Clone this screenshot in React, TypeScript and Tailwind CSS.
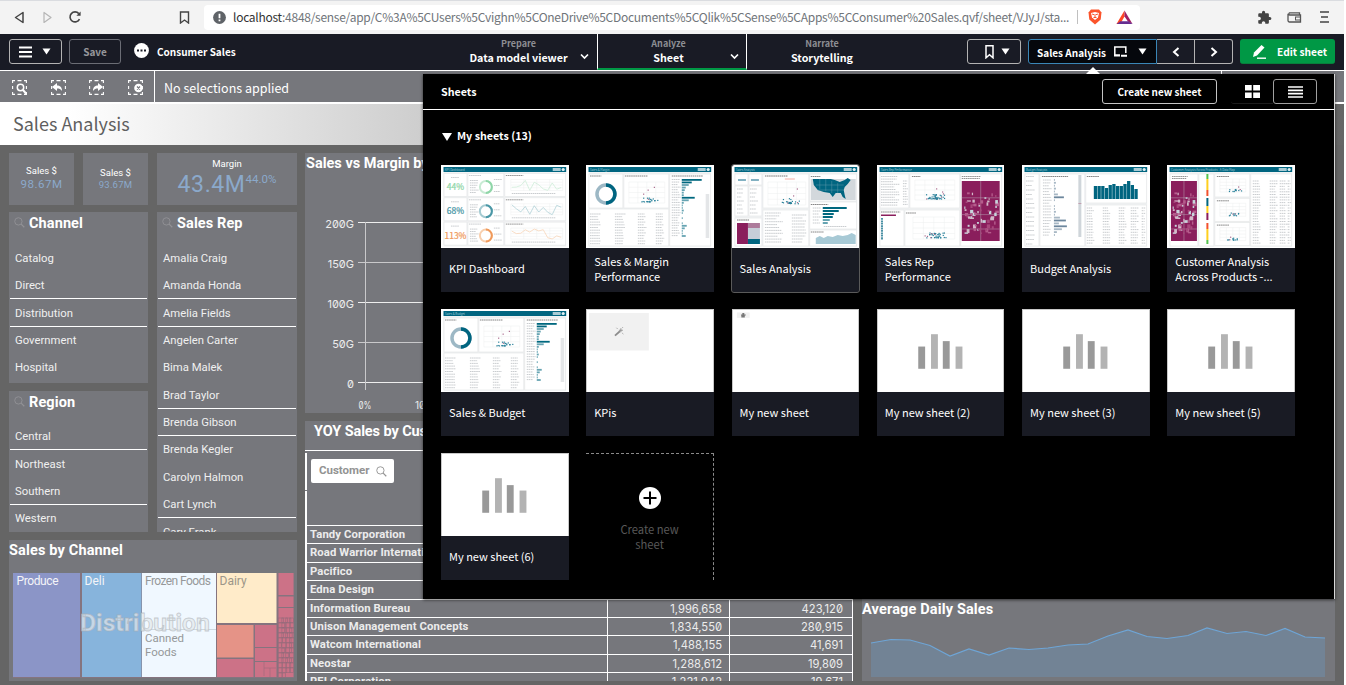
import React, { type ReactNode } from 'react';
import { MdExtension } from 'react-icons/md';

const rnd = (seed: number) => {
  const v = Math.sin(seed * 127.1 + 11.7) * 43758.5453;
  return v - Math.floor(v);
};
const range = (n: number) => Array.from({ length: n }, (_, i) => i);

const TEAL = '#006580';
const PLUM = '#8a1e5c';

function Caret({ className = '' }: { className?: string }) {
  return (
    <svg className={`shrink-0 ${className}`} width="9" height="7" viewBox="0 0 9 7">
      <path d="M0.5 0.5h8L4.5 6.5z" fill="#fff" />
    </svg>
  );
}

function Chevron({ d = 'M1 1.5l3.5 3.5L8 1.5', className = '' }: { d?: string; className?: string }) {
  return (
    <svg className={className} width="9" height="7" viewBox="0 0 9 7">
      <path d={d} fill="none" stroke="#fff" strokeWidth="1.7" />
    </svg>
  );
}

function BrowserBar() {
  return (
    <div className="flex h-[34px] items-center border-t border-[#dadce0] bg-[#f3f3f3] pb-px">
      <svg className="ml-[14px]" width="11" height="13" viewBox="0 0 11 13">
        <path d="M9 1.5v10L1.5 6.5z" fill="none" stroke="#444" strokeWidth="1.5" strokeLinejoin="round" />
      </svg>
      <svg className="ml-[17px]" width="11" height="13" viewBox="0 0 11 13">
        <path d="M2 1.5v10L9 6.5z" fill="none" stroke="#b5b5b5" strokeWidth="1.2" strokeLinejoin="round" />
      </svg>
      <svg className="ml-[15px]" width="14" height="14" viewBox="0 0 14 14">
        <path d="M11.5 9.2A5 5 0 1 1 10.8 3.6" fill="none" stroke="#444" strokeWidth="1.6" />
        <path d="M12.6 1.5v4.2H8.4z" fill="#444" />
      </svg>
      <svg className="ml-[97px]" width="11" height="13" viewBox="0 0 11 13">
        <path d="M1.5 1h8v11l-4-3-4 3z" fill="none" stroke="#444" strokeWidth="1.4" />
      </svg>
      <div className="ml-[14px] flex h-[25px] w-[936px] items-center rounded bg-white">
        <svg className="ml-[9px] shrink-0" width="13" height="13" viewBox="0 0 13 13">
          <circle cx="6.5" cy="6.5" r="6.4" fill="#5f6368" />
          <path d="M6.5 2.7v4.6M6.5 8.6v1.7" stroke="#fff" strokeWidth="1.8" />
        </svg>
        <div className="ml-[7px] w-[840px] font-['Noto_Sans_CJK_SC',sans-serif] text-[12px] leading-[22px] tracking-[-0.27px] whitespace-nowrap text-[#70757a]">
          <span className="text-[#333]">localhost</span>:4848/sense/app/C%3A%5CUsers%5Cvighn%5COneDrive%5CDocuments%5CQlik%5CSense%5CApps%5CConsumer%20Sales.qvf/sheet/VJyJ/sta...
        </div>
        <div className="ml-[4px] h-[14px] w-px bg-[#c0c0c0]" />
        <svg className="ml-[10px]" width="14" height="16" viewBox="0 0 14 16">
          <path d="M3 .5h8l2.5 3-.8 7L7 15.5 1.300 10.500.5 3.500z" fill="#fb542b" />
          <path d="M3 4l4-1 4 1-1 4.500L7 11 4 8.500z" fill="#fff" />
          <path d="M4 5l2 .7M10 5l-2 .7M7 5v3.200M5.500 8.500h3" stroke="#fb542b" strokeWidth="1" />
        </svg>
        <svg className="ml-[14px]" width="17" height="15" viewBox="0 0 17 15">
          <path d="M8.500.5L.5 14h3.700L8.500 6.600z" fill="#ff4724" />
          <path d="M8.500.5L16.500 14 12 11.500 8.500 6.600z" fill="#9e1f63" />
          <path d="M.5 14h16l-4-2.700H4.500z" fill="#662d91" />
        </svg>
      </div>
      <MdExtension className="ml-[117px]" size={15} color="#444" />
      <svg className="ml-[15px]" width="15" height="13" viewBox="0 0 15 13">
        <path d="M12.500 3.500V1.800H2.500a1.300 1.300 0 0 0 0 2.200h11v7H2.500a1.500 1.500 0 0 1-1.500-1.500V2.700" fill="none" stroke="#555" strokeWidth="1.300" />
        <rect x="8.500" y="6" width="5" height="3" fill="none" stroke="#555" />
      </svg>
      <svg className="ml-[18px]" width="9" height="12" viewBox="0 0 9 12">
        <path d="M0 1h9M1 6h7M0 11h9" stroke="#444" strokeWidth="1.500" />
      </svg>
    </div>
  );
}

function NavTab({ label, title, active, chevron, width }: { label: string; title: string; active?: boolean; chevron?: string; width: string }) {
  return (
    <div className={`relative flex h-[36px] flex-col items-center pt-[3px] ${width} ${active ? 'border-x border-b-2 border-white border-b-[#009845]' : ''}`}>
      <span className="text-[9px] leading-[13px] text-[#8d8e93]">{label}</span>
      <span className="text-[10.700px] leading-[15px] font-bold text-white">{title}</span>
      {chevron && <Chevron className={`absolute top-[19px] ${chevron}`} />}
    </div>
  );
}

function TopBar() {
  return (
    <div className="flex h-[37px] border-b border-white bg-[#191b25] text-[10px] font-bold text-white">
      <div className="mt-[5px] ml-[9px] flex h-[25px] w-[53px] items-center rounded-[3px] border border-[#b3b3b3]">
        <svg className="ml-[9px]" width="13" height="12" viewBox="0 0 13 12">
          <path d="M0 1.500h13M0 6h13M0 10.500h13" stroke="#fff" strokeWidth="2.200" />
        </svg>
        <Caret className="ml-[10px]" />
      </div>
      <div className="mt-[5px] ml-[7px] flex h-[25px] w-[52px] items-center justify-center rounded-[3px] border border-[#6b6d75] text-[#96979b]">Save</div>
      <svg className="mt-[9px] ml-[13px]" width="15" height="15" viewBox="0 0 15 15">
        <circle cx="7.500" cy="7.500" r="7.400" fill="#fff" />
        <path d="M3 6.500h2v2h-2zM6.500 6.500h2v2h-2zM10 6.500h2v2h-2z" fill="#191b25" />
      </svg>
      <div className="mt-[9px] ml-[8px] w-[284px] pt-px leading-[16px]">Consumer Sales</div>
      <NavTab width="w-[156px] pr-[1px]" label="Prepare" title="Data model viewer" chevron="left-[139px]" />
      <NavTab width="w-[150px] pr-[7px]" label="Analyze" title="Sheet" active chevron="left-[132px]" />
      <NavTab width="w-[150px]" label="Narrate" title="Storytelling" />
      <div className="mt-[5px] ml-[70px] flex h-[25px] w-[54px] items-center rounded-[3px] border border-[#b3b3b3]">
        <svg className="ml-[17px]" width="9" height="14" viewBox="0 0 9 14">
          <path d="M1 .8h7v12l-3.500-3-3.500 3z" fill="none" stroke="#fff" strokeWidth="1.500" />
        </svg>
        <Caret className="ml-[7px]" />
      </div>
      <div className="mt-[5px] ml-[7px] flex h-[25px] w-[129px] items-center rounded-l-[3px] border border-[#3a86b7] bg-[#05070c] pl-[8px]">
        <span className="w-[68px] pt-px whitespace-nowrap">Sales Analysis</span>
        <svg className="ml-[8px] shrink-0" width="15" height="12" viewBox="0 0 15 12">
          <path d="M7 9.200H1.800V1h11v6" fill="none" stroke="#fff" strokeWidth="1.500" />
          <path d="M1 9.500h6M8 9.800h6" stroke="#fff" strokeWidth="2" />
        </svg>
        <Caret className="ml-[10px]" />
      </div>
      <div className="mt-[5px] flex h-[25px] w-[38px] items-center justify-center border-y border-r border-[#b3b3b3]">
        <svg width="8" height="10" viewBox="0 0 8 10"><path d="M6.500 1L2 5l4.500 4" fill="none" stroke="#fff" strokeWidth="2" /></svg>
      </div>
      <div className="mt-[5px] flex h-[25px] w-[38px] items-center justify-center rounded-r-[3px] border-y border-r border-[#b3b3b3]">
        <svg width="8" height="10" viewBox="0 0 8 10"><path d="M1.500 1L6 5l-4.500 4" fill="none" stroke="#fff" strokeWidth="2" /></svg>
      </div>
      <div className="mt-[5px] ml-[7px] flex h-[25px] w-[95px] items-center rounded-[3px] border-b border-[#087f3c] bg-[#009845] text-[10.200px]">
        <svg className="ml-[12px]" width="15" height="15" viewBox="0 0 15 15">
          <path d="M1 13l1-4.500L9.500 1l3 2.500L5 11.500z" fill="#fff" />
          <path d="M5 14.200h9" stroke="#fff" strokeWidth="1.400" />
        </svg>
        <span className="ml-[10px] pt-px whitespace-nowrap">Edit sheet</span>
      </div>
    </div>
  );
}

function SelIcon({ children }: { children: ReactNode }) {
  return (
    <svg className="shrink-0" width="15" height="15" viewBox="0 0 15 15">
      <path d="M.6 3V.6H3M5.500.6h4M12 .6h2.400V3M14.400 6v3M14.400 12v2.400H12M9.500 14.400h-4M3 14.400H.6V12M.6 9V6" fill="none" stroke="#fff" strokeWidth="1.100" />
      {children}
    </svg>
  );
}

function SelectionBar() {
  return (
    <div className="flex h-[32px] items-center border-b border-white bg-[#76777c]">
      <div className="flex h-full w-[155px] items-center gap-[23.500px] border-r border-white pt-[2px] pl-[12px]">
        <SelIcon><circle cx="8.500" cy="7.500" r="3.200" fill="#76777c" stroke="#fff" strokeWidth="1.500" /><path d="M11 10l3.500 4" stroke="#fff" strokeWidth="2" /></SelIcon>
        <SelIcon><path d="M1 7l5-4v2.500c3 0 5 1.500 5 5.500-1.500-2-2.500-2.500-5-2.500V11z" fill="#fff" /></SelIcon>
        <SelIcon><path d="M14 7L9 3v2.500c-3 0-5 1.500-5 5.500 1.500-2 2.500-2.500 5-2.500V11z" fill="#fff" /></SelIcon>
        <SelIcon><circle cx="10.500" cy="8" r="4.300" fill="#fff" /><path d="M9 6.500l3 3M12 6.500l-3 3" stroke="#76777c" strokeWidth="1.200" /></SelIcon>
      </div>
      <span className="ml-[9px] pt-[2px] text-[12.500px] leading-[20px] text-white">No selections applied</span>
      <div className="ml-auto h-full w-[123px] border-l border-white" />
    </div>
  );
}

function Magnifier({ className, size }: { className: string; size: number }) {
  return (
    <svg className={`shrink-0 ${className}`} width={size} height={size} viewBox="0 0 12 12" fill="none" stroke="currentColor">
      <circle cx="4.800" cy="4.800" r="4" strokeWidth="1" />
      <path d="M7.800 7.800l3.400 3.400" strokeWidth="1.300" />
    </svg>
  );
}

function ListBox({ title, items, lines, className, gap }: { title: string; items: string[]; lines: number[]; className: string; gap: string }) {
  return (
    <div className={`overflow-hidden bg-[#76777c] ${className}`}>
      <div className={`flex items-start pt-[3px] ${gap}`}>
        <Magnifier className="mt-[2px] ml-[5px] text-[#929296]" size={11} />
        <span className="ml-[4px] text-[14.500px] leading-[17px] font-bold tracking-[.1px] text-white">{title}</span>
      </div>
      {items.map((t, i) => (
        <div key={t} className={`mx-px flex h-[27.400px] items-center border-b pt-[3px] pl-[5px] text-[11.300px] text-[#f0f0f0] ${lines.includes(i) ? 'border-white' : 'border-transparent'}`}>
          {t}
        </div>
      ))}
    </div>
  );
}

function Treemap() {
  const cells: [number, number, number, number][] = range(46).map((i) => {
    const row = Math.floor(i / 4);
    return [265 + (i % 4) * 3.900, 45 + row * 5, 3.400, 4.400];
  });
  return (
    <svg className="ml-[4px] block font-['Roboto',sans-serif]" width="281" height="105" viewBox="0 0 281 105">
      <rect width="281" height="105" fill="#85747f" />
      <rect width="67" height="104" fill="#8b95c7" />
      <rect x="69" width="59.500" height="104" fill="#87b4dc" />
      <rect x="129" width="74" height="104" fill="#f0f8ff" />
      <path d="M129 56.500h74" stroke="#cfd8de" />
      <rect x="204" width="59.500" height="50" fill="#ffebc9" />
      <rect x="204" y="52" width="36.500" height="32.500" fill="#e59387" />
      <rect x="204" y="86" width="36.500" height="18" fill="#cc7287" />
      <rect x="242" y="52" width="21.500" height="22" fill="#cc7287" />
      <rect x="242" y="75" width="21.500" height="13" fill="#cc7287" />
      <rect x="242" y="89" width="21.500" height="15" fill="#cc7287" />
      <path d="M251 89v6h12M257 95v9M251 95v8" stroke="#a06a7c" fill="none" strokeWidth=".7" />
      <rect x="265.500" width="15" height="22" fill="#cc7287" />
      <rect x="265.500" y="23.500" width="15" height="10.500" fill="#cc7287" />
      <rect x="265.500" y="35" width="15" height="69" fill="#cc7287" />
      {cells.map((c, i) => (
        <rect key={i} x={c[0]} y={c[1]} width={c[2] + rnd(i) * 3} height={c[3]} fill="none" stroke="#936b7b" strokeWidth=".6" />
      ))}
      <g fontSize="12">
        <text x="3.500" y="12" fill="#f4f4f8" textLength="42">Produce</text>
        <text x="71.500" y="12" fill="#f4f4f8">Deli</text>
        <text x="132" y="12" fill="#96989a" textLength="66">Frozen Foods</text>
        <text x="206.500" y="12" fill="#9c9688">Dairy</text>
        <text x="132" y="68.500" fill="#96989a" fontSize="11.500">Canned</text>
        <text x="132" y="83" fill="#96989a" fontSize="11.500">Foods</text>
      </g>
      <text x="67" y="58" fontSize="23" fontWeight="700" textLength="130" lengthAdjust="spacingAndGlyphs" fill="#e4e8ec" fillOpacity=".7" stroke="#a8adb2" strokeOpacity=".6" strokeWidth=".8">Distribution</text>
    </svg>
  );
}

const rows: [string, string, string][] = [
  ['Tandy Corporation', '', ''],
  ['Road Warrior International', '', ''],
  ['Pacifico', '', ''],
  ['Edna Design', '', ''],
  ['Information Bureau', '1,996,658', '423,120'],
  ['Unison Management Concepts', '1,834,550', '280,915'],
  ['Watcom International', '1,488,155', '41,691'],
  ['Neostar', '1,288,612', '19,809'],
  ['RFI Corporation', '1,231,942', '19,671'],
];

function MiddleColumn() {
  return (
    <div className="ml-[8px] flex w-[548px] flex-col gap-[8px]">
      <div className="h-[260px] overflow-hidden bg-[#76777c]">
        <div className="pt-[2px] pl-[1px] text-[14.500px] leading-[17px] font-bold whitespace-nowrap text-white">Sales vs Margin by Product</div>
        <svg className="block font-['Inter',sans-serif]" width="540" height="241" viewBox="0 0 540 241">
          {['200G', '150G', '100G', '50G', '0'].map((t, i) => (
            <g key={t}>
              <path d={`M53 ${50.500 + i * 40}H540`} stroke={i % 2 ? '#c9c9cb' : '#eeeeee'} />
              <text x="49" y={55.500 + i * 40} fontSize="11" textAnchor="end" fill="#ececec" style={{ fontFeatureSettings: '"zero"' }}>{t}</text>
            </g>
          ))}
          <path d="M60.500 50v168" stroke="#c9c9cb" />
          <text x="53.500" y="237" fontSize="10" textLength="13" lengthAdjust="spacingAndGlyphs" fill="#ececec" style={{ fontFeatureSettings: '"zero"' }}>0%</text>
          <text x="110" y="237" fontSize="10" fill="#ececec" style={{ fontFeatureSettings: '"zero"' }}>10%</text>
        </svg>
      </div>
      <div className="flex h-[260px] flex-col overflow-hidden bg-[#76777c]">
        <div className="h-[30px] shrink-0 border-b border-white pt-[2px] pl-[9px] text-[14.500px] leading-[18px] font-bold tracking-[-.1px] text-white">YOY Sales by Customer</div>
        <div className="mt-[2px] h-[37px] shrink-0 border-l-2 border-white pt-[6px] pl-[4px]">
          <div className="flex h-[24px] w-[83px] items-center rounded-[2px] bg-white pl-[8px] text-[11.500px] font-bold text-[#939393]">
            Customer<Magnifier className="ml-[6px]" size={11} />
          </div>
        </div>
        <div className="mt-px h-[35px] shrink-0 border-b border-l-2 border-white" />
        {rows.map(([n, a, b]) => (
          <div key={n} className="flex h-[18.400px] shrink-0 border-b border-l-2 border-white text-[11.300px] leading-[18px] text-[#ececec]">
            <div className="w-[301px] border-r border-white pl-[3px] font-bold tracking-[.1px] whitespace-nowrap">{n}</div>
            <div className="w-[122px] border-r border-white pr-[7px] text-right font-['Inter',sans-serif] text-[11.200px] slashed-zero">{a}</div>
            <div className="w-[123px] border-r border-white pr-[9px] text-right font-['Inter',sans-serif] text-[11.200px] slashed-zero">{b}</div>
          </div>
        ))}
      </div>
    </div>
  );
}

function Dashboard() {
  const pts = '9,61 29,57.500 48,58 68,63.500 88,74 107,67 127,73 147,66 167,67.500 186,66 206,63 226,62 246,54 266,48 285,54.500 305,56.500 326,53.500 345,46 365,51.500 384,49.500 404,53.500 423,46.500 443,55 463,56';
  return (
    <div className="flex h-[540px] bg-[#656565] pt-[8px] pl-[9px] font-['Roboto',sans-serif]">
      <div className="flex w-[288px] flex-col">
        <div className="flex h-[52px] gap-[9px] text-[9.500px] text-white">
          <div className="flex w-[65px] flex-col items-center bg-[#76777c] pt-[12px] leading-[12px]">
            Sales $<span className="text-[11.500px] leading-[15px] tracking-[.5px] text-[#8ba9cb]">98.67M</span>
          </div>
          <div className="flex w-[65px] flex-col items-center bg-[#76777c] pt-[14px] leading-[12px]">
            Sales $<span className="text-[9.500px] leading-[12px] tracking-[.2px] text-[#8ba9cb]">93.67M</span>
          </div>
          <div className="flex w-[140px] flex-col items-center bg-[#76777c] pt-[4px] leading-[13px]">
            Margin
            <div className="flex items-start text-[#8ba9cb] slashed-zero">
              <span className="text-[23px] leading-[30px] font-normal tracking-[.6px]">43.4M</span>
              <span className="pt-[2px] text-[11.500px] leading-[14px]">44.0%</span>
            </div>
          </div>
        </div>
        <div className="mt-[7px] flex gap-[9px]">
          <div className="flex w-[139px] flex-col gap-[8px]">
            <ListBox title="Channel" gap="h-[32.500px]" className="h-[171px]" lines={[1, 2]} items={['Catalog', 'Direct', 'Distribution', 'Government', 'Hospital']} />
            <ListBox title="Region" gap="h-[32px]" className="h-[141px]" lines={[0, 2]} items={['Central', 'Northeast', 'Southern', 'Western']} />
          </div>
          <ListBox title="Sales Rep" gap="h-[32.500px]" className="h-[320px] w-[140px]" lines={[1, 2, 5, 6, 9]} items={['Amalia Craig', 'Amanda Honda', 'Amelia Fields', 'Angelen Carter', 'Bima Malek', 'Brad Taylor', 'Brenda Gibson', 'Brenda Kegler', 'Carolyn Halmon', 'Cart Lynch', 'Cary Frank']} />
        </div>
        <div className="mt-[8px] h-[141px] bg-[#76777c]">
          <div className="h-[33px] pt-[2px] text-[14.500px] leading-[18px] font-bold tracking-[.15px] text-white">Sales by Channel</div>
          <Treemap />
        </div>
      </div>
      <MiddleColumn />
      <div className="ml-[9px] h-[528px] w-[473px] bg-[#76777c] pt-[447px]">
        <div className="h-[19px] pt-px text-[14.500px] leading-[18px] font-bold tracking-[.15px] text-white">Average Daily Sales</div>
        <svg className="-mt-[15px] block" width="473" height="76" viewBox="0 22 473 76">
          <polygon points={`9,95 ${pts} 463,95`} fill="#728395" />
          <polyline points={pts} fill="none" stroke="#6ea5d6" strokeWidth="1.200" />
        </svg>
      </div>
    </div>
  );
}

/* ---------- sheet thumbnails ---------- */

function Box({ x, y, w, h }: { x: number; y: number; w: number; h: number }) {
  return <rect x={x} y={y} width={w} height={h} fill="#fff" stroke="#e6e8e9" strokeWidth=".7" />;
}
function Lines({ x, y, w, n, gap, seed = 1, color = '#c3c6c9' }: { x: number; y: number; w: number; n: number; gap: number; seed?: number; color?: string }) {
  return (
    <g stroke={color} strokeWidth=".9" strokeDasharray="1.600 .5">
      {range(n).map((i) => (
        <path key={i} d={`M${x} ${y + i * gap}h${w * (0.600 + 0.400 * rnd(seed + i))}`} />
      ))}
    </g>
  );
}
function Grid({ x, y, w, h }: { x: number; y: number; w: number; h: number }) {
  return (
    <path stroke="#eceeef" strokeWidth=".5" fill="none" d={range(5).map((i) => `M${x} ${y + (i * h) / 4}h${w}M${x + (i * w) / 4} ${y}v${h}`).join('')} />
  );
}
function Scatter({ x, y, w, h, n, seed }: { x: number; y: number; w: number; h: number; n: number; seed: number }) {
  return (
    <g>
      <Grid x={x} y={y} w={w} h={h} />
      {range(n).map((i) => {
        const a = (rnd(seed + i) + rnd(seed + i + 200)) / 2;
        const b = rnd(seed + i * 3 + 50);
        return <rect key={i} x={x + w * (0.25 + 0.600 * a)} y={y + h * (0.92 - (i % 7 === 0 ? 0.700 : 0.220) * b * b)} width="1.200" height="1.200" fill={i % 7 === 0 ? '#a9688c' : '#28809a'} />;
      })}
    </g>
  );
}
function Donut({ cx, cy, r, c, w, light }: { cx: number; cy: number; r: number; c: string; w: number; light: string }) {
  return (
    <g fill="none" strokeWidth={w}>
      <circle cx={cx} cy={cy} r={r} stroke={light} />
      <path d={`M${cx} ${cy - r}A${r} ${r} 0 0 1 ${cx} ${cy + r}`} stroke={c} />
    </g>
  );
}
function Heat({ x, y, w, h }: { x: number; y: number; w: number; h: number }) {
  return (
    <g>
      <rect x={x} y={y} width={w} height={h} fill={PLUM} />
      <path d={`M${x + w / 2} ${y}v${h}M${x} ${y + h * 0.280}h${w}M${x} ${y + h * 0.560}h${w}M${x} ${y + h * 0.800}h${w}`} stroke="#b7a3b4" strokeWidth=".5" />
      {range(60).map((i) => (
        <rect key={i} x={x + rnd(i + 3) * (w - 4)} y={y + h * 0.180 + rnd(i + 70) * h * 0.680} width={1 + rnd(i + 9) * 3} height={1 + rnd(i + 5) * 3} fill={['#d3b9c9', '#b55c8c', '#c7d5dc', '#a8487c'][i % 4]} />
      ))}
    </g>
  );
}
function HBars({ x, y, sizes, gap, color = '#00687f', h = 1.800 }: { x: number; y: number; sizes: number[]; gap: number; color?: string; h?: number }) {
  return (
    <g fill={color}>
      {sizes.map((s, i) => <rect key={i} x={x} y={y + i * gap} width={s} height={h} opacity={s < 10 ? 0.600 : 1} />)}
    </g>
  );
}
function Frame({ title, children }: { title: string; children: ReactNode }) {
  return (
    <svg className="block h-[83px] w-full bg-white font-['Noto_Sans_CJK_SC',sans-serif]" viewBox="0 0 128 83" preserveAspectRatio="none">
      <rect x="2.500" y="7" width="123" height="74.500" fill="#f2f3f4" />
      <rect x="2.500" y="2" width="123" height="5" fill={TEAL} />
      <text x="4" y="5.700" fontSize="2.900" fill="#9cc5d0">{title}</text>
      <rect x="112" y="3" width="8" height="3" fill="#a9cbd4" />
      <circle cx="122.500" cy="4.500" r="1.600" fill="#e3f0f3" />
      {children}
    </svg>
  );
}

function KpiThumb() {
  const data: [string, string, string][] = [['44%', '#8fd6a8', '#c8ebd4'], ['68%', '#4a97a6', '#a5cbd2'], ['113%', '#f09a5b', '#f8cfae']];
  return (
    <Frame title="KPI Dashboard">
      {data.map(([t, c, l], i) => {
        const y = 8.500 + i * 24.300;
        return (
          <g key={t}>
            <Box x={3} y={y} w={23} h={23} /><Box x={27} y={y} w={36} h={23} /><Box x={64} y={y} w={61} h={23} />
            <Lines x={10} y={y + 4} w={9} n={1} gap={2} />
            <text x="14.500" y={y + 16.500} fontSize="8.500" textAnchor="middle" fill={c} stroke={c} strokeWidth=".25">{t}</text>
            <Lines x={28} y={y + 2} w={14} n={1} gap={2} /><Lines x={29} y={y + 7} w={9} n={6} gap={2.400} seed={i} />
            <Lines x={53} y={y + 6} w={8} n={3} gap={6} seed={i + 4} />
            <Donut cx={45} cy={y + 13.500} r={6} w={2} c={c} light={l} />
            <Lines x={65} y={y + 2} w={20} n={1} gap={2} color="#888" />
            <Grid x={70} y={y + 6} w={52} h={11} />
            <polyline fill="none" stroke={l} strokeWidth=".7" points={range(12).map((k) => `${71 + k * 4.500},${y + 6 + rnd(k + i * 20) * 11}`).join(' ')} />
            <Lines x={71} y={y + 20} w={50} n={1} gap={1} />
          </g>
        );
      })}
    </Frame>
  );
}
function MarginThumb({ title }: { title: string }) {
  return (
    <Frame title={title}>
      <Box x={3} y={9} w={34} h={34} /><Box x={38} y={9} w={45} h={34} /><Box x={84} y={9} w={41} h={72} /><Box x={3} y={44} w={80} h={37} />
      <Lines x={4} y={11} w={13} n={1} gap={2} color="#777" />
      <Donut cx={20} cy={29} r={9} w={3.500} c={TEAL} light="#9db8c5" />
      <Lines x={39} y={11} w={26} n={1} gap={2} color="#777" />
      <Scatter x={43} y={17} w={36} h={21} n={24} seed={20} />
      <Lines x={86} y={11} w={36} n={1} gap={2} color="#777" />
      <Lines x={86} y={14.500} w={9} n={23} gap={2.550} />
      <HBars x={96} y={14} gap={2.550} sizes={[20, 10, 7, 4, 3, 2, 2, 13, 7, 2, 1, 1, 2, 1, 0, 1, 0, 1, 5, 3, 1, 1, 4]} />
      <rect x="120" y="29" width="3.500" height="44" fill="#e4e6e8" />
      {[4, 29, 52, 70].map((x, k) => <Lines key={x} x={x} y={49} w={k < 2 ? 11 : 9} n={12} gap={2.700} seed={x} />)}
    </Frame>
  );
}
function AnalysisThumb() {
  return (
    <Frame title="Sales Analysis">
      <Box x={3} y={9} w={13} h={11} /><Box x={17} y={9} w={13} h={11} /><Box x={3} y={21} w={13} h={30} /><Box x={17} y={21} w={13} h={30} />
      <Box x={3} y={53} w={27} h={28} /><Box x={31} y={9} w={46} h={34} /><Box x={31} y={45} w={46} h={36} /><Box x={78} y={9} w={47} h={27} /><Box x={78} y={37} w={47} h={27} /><Box x={78} y={65} w={47} h={16} />
      <path d="M6 15h8M19 15h8" stroke="#5a98ae" strokeWidth="1.500" />
      <Lines x={5} y={24} w={7} n={7} gap={4} /><Lines x={18} y={24} w={8} n={7} gap={4} />
      <rect x="5" y="58" width="11" height="21" fill={PLUM} /><rect x="16" y="58" width="12" height="5" fill="#ad7b9b" /><rect x="16" y="63" width="12" height="11" fill="#c6ced8" /><rect x="16" y="74" width="12" height="5" fill={TEAL} />
      <Lines x={33} y={11} w={26} n={1} gap={2} color="#666" /><Lines x={5} y={55} w={14} n={1} gap={2} color="#666" />
      <path d="M53 14h10" stroke="#f39a90" strokeWidth=".8" />
      <Scatter x={36} y={17} w={38} h={23} n={26} seed={7} />
      <Lines x={33} y={48} w={18} n={11} gap={2.900} /><Lines x={60} y={50} w={15} n={10} gap={3} seed={8} />
      <rect x="79" y="14" width="45" height="21" fill="#d3d8dc" />
      <path d="M81 14h18l4 1 5 2 5-2 3-2 3 2-3 4-3 3-1 3 1 5 1 4-3-2-2-4-5 0-3 4-3-4-6-1-6-2-4-5z" fill={TEAL} />
      <path d="M88 14v10M94 14v12M100 16v12M106 18v10M84 20h28M86 25h26" stroke="#6ea2b3" strokeWidth=".4" />
      <Lines x={79} y={11.500} w={11} n={1} gap={2} color="#777" /><Lines x={79} y={39.500} w={20} n={1} gap={2} color="#777" />
      <Lines x={81} y={43} w={9} n={6} gap={3} /><HBars x={91} y={42} gap={3} h={2} sizes={[24, 16, 11, 10, 7, 5]} />
      <Lines x={92} y={61.500} w={26} n={1} gap={2} />
      <Lines x={79} y={67} w={15} n={1} gap={2} color="#777" />
      <path d="M84 79v-6l4-2 4 2 4-2 5 1 5-2 5 1 5-1 4-2 4 2v9z" fill="#a7c9d5" />
    </Frame>
  );
}
function RepThumb() {
  return (
    <Frame title="Sales Rep Performance">
      <Box x={3} y={9} w={29} h={34} /><Box x={33} y={9} w={50} h={34} /><Box x={84} y={9} w={41} h={72} /><Box x={3} y={45} w={24} h={36} /><Box x={28} y={45} w={55} h={36} />
      <Lines x={4} y={11.500} w={19} n={12} gap={2.600} /><Lines x={26} y={16} w={5} n={10} gap={2.600} />
      <Lines x={35} y={11.500} w={10} n={1} gap={2} color="#777" /><Lines x={29} y={48} w={12} n={1} gap={2} color="#777" /><Lines x={4} y={47} w={22} n={1} gap={2} color="#777" />
      <Scatter x={38} y={15} w={40} h={20} n={45} seed={31} /><Scatter x={36} y={52} w={42} h={22} n={40} seed={61} />
      <rect x="4" y="49.500" width="15" height="1.500" fill={PLUM} /><path d="M5 53v22" stroke="#4c91a5" strokeWidth="2" strokeDasharray="1.800 .6" />
      <Lines x={85} y={11.500} w={22} n={2} gap={2} color="#888" />
      <Heat x={85} y={16} w={38} h={60} />
    </Frame>
  );
}
function BudgetThumb() {
  return (
    <Frame title="Budget Analysis">
      <Box x={3} y={9} w={14} h={72} /><Box x={18} y={9} w={45} h={72} /><Box x={64} y={9} w={61} h={29} /><Box x={64} y={40} w={61} h={41} />
      <Lines x={4} y={11.500} w={9} n={16} gap={4.500} /><Lines x={20} y={11.500} w={30} n={1} gap={2} color="#777" /><Lines x={21} y={15} w={9} n={20} gap={2.900} />
      <HBars x={32} y={14} gap={2.900} sizes={[1, 2, 1, 2, 1, 4, 10, 1, 0, 1, 1, 2, 1, 6, 12, 5, 13, 8, 3, 1]} color="#6d879d" />
      <path d="M58 10v62" stroke="#cfd5da" strokeWidth="3" /><path d="M58 38v1" stroke="#c2a0b0" strokeWidth="3" />
      <Lines x={65} y={11.500} w={14} n={1} gap={2} color="#777" />
      {[13, 13, 13, 11, 14, 15, 13, 13, 15, 18, 14, 10].map((h, i) => <rect key={i} x={72 + i * 3.700} y={34 - h} width="3.300" height={h} fill={TEAL} />)}
      {[65, 81, 97, 109, 120].map((x) => <Lines key={x} x={x} y={43} w={x === 120 ? 4 : 8} n={14} gap={2.700} seed={x} />)}
    </Frame>
  );
}
function CustomerThumb() {
  return (
    <Frame title="Customer Analysis Across Products - A Data Map">
      <Box x={3} y={9} w={28} h={72} /><Box x={32} y={9} w={15} h={72} />
      {range(3).map((i) => (
        <g key={i}>
          <Box x={48} y={9 + i * 24.300} w={35} h={23} />
          <Scatter x={53} y={14 + i * 24.300} w={26} h={13} n={12} seed={i * 30} />
          <Lines x={50} y={11.500 + i * 24.300} w={14} n={1} gap={2} color="#777" />
        </g>
      ))}
      <Box x={84} y={9} w={41} h={72} />
      <Lines x={5} y={11.500} w={18} n={2} gap={2} color="#888" /><Heat x={4} y={16} w={26} h={60} />
      <rect x="39.500" y="9" width="2" height="5" fill="#55c24c" /><rect x="39.500" y="14" width="2" height="11" fill="#ffcf1f" /><rect x="39.500" y="25" width="2" height="6" fill="#f2512e" />
      <rect x="39.500" y="33" width="2" height="8" fill={TEAL} /><rect x="39.500" y="41" width="2" height="7" fill="#ffcf1f" /><rect x="39.500" y="48" width="2" height="7" fill={PLUM} />
      <rect x="39.500" y="58" width="2" height="6" fill="#f2512e" /><rect x="39.500" y="64" width="2" height="11" fill="#ffcf1f" /><rect x="39.500" y="75" width="2" height="4" fill="#55c24c" />
      {[86, 103, 113, 121].map((x) => <Lines key={x} x={x} y={16} w={x === 121 ? 3.500 : 8} n={24} gap={2.700} seed={x} />)}
    </Frame>
  );
}
function EmptyThumb() {
  return (
    <svg className="block h-[83px] w-full border-x border-t border-[#c8c8c8] bg-white" viewBox="0 0 128 83" preserveAspectRatio="none">
      <rect x="41" y="37" width="7" height="22.500" fill="#999" />
      <rect x="54" y="24.500" width="7" height="35" fill="#b3b3b3" />
      <rect x="66" y="31.500" width="7" height="28" fill="#999" />
      <rect x="79" y="37" width="7" height="22.500" fill="#b3b3b3" />
    </svg>
  );
}
function KpisThumb() {
  return (
    <svg className="block h-[83px] w-full border-x border-t border-[#c8c8c8] bg-white" viewBox="0 0 128 83" preserveAspectRatio="none">
      <rect x="2" y="3" width="61" height="38" fill="#f1f1f1" />
      <path d="M28.500 26l5-4.500" stroke="#8c8c8c" strokeWidth="1.800" />
      <path d="M34.500 18.500v4M32.500 20.500h4M30 18l1 1M36.500 17.500l-.8.8M36 23.500l1 .8" stroke="#8c8c8c" strokeWidth=".9" />
    </svg>
  );
}
function NewThumb() {
  return (
    <svg className="block h-[83px] w-full border-x border-t border-[#c8c8c8] bg-white" viewBox="0 0 128 83" preserveAspectRatio="none">
      <rect x="4" y="2.500" width="13" height="5.500" fill="#f1f1f1" />
      <path d="M8 4.500h1.500V3h2v1.500h1.500v1h-1v2H8.500V6z" fill="#777" />
    </svg>
  );
}

const sheets: { title: string; thumb: ReactNode; selected?: boolean }[] = [
  { title: 'KPI Dashboard', thumb: <KpiThumb /> },
  { title: 'Sales & Margin\nPerformance', thumb: <MarginThumb title="Sales & Margin" /> },
  { title: 'Sales Analysis', thumb: <AnalysisThumb />, selected: true },
  { title: 'Sales Rep\nPerformance', thumb: <RepThumb /> },
  { title: 'Budget Analysis', thumb: <BudgetThumb /> },
  { title: 'Customer Analysis\nAcross Products -...', thumb: <CustomerThumb /> },
  { title: 'Sales & Budget', thumb: <MarginThumb title="Sales & Budget" /> },
  { title: 'KPis', thumb: <KpisThumb /> },
  { title: 'My new sheet', thumb: <NewThumb /> },
  { title: 'My new sheet (2)', thumb: <EmptyThumb /> },
  { title: 'My new sheet (3)', thumb: <EmptyThumb /> },
  { title: 'My new sheet (5)', thumb: <EmptyThumb /> },
  { title: 'My new sheet (6)', thumb: <EmptyThumb /> },
];

function SheetsPanel() {
  return (
    <div className="absolute top-[74px] left-[423px] h-[525px] w-[912px] border-r border-r-[#d8d8d8] bg-black text-white shadow-[0_1px_3px_rgba(0,0,0,.6)]">
      <svg className="absolute -top-[7px] left-[663px]" width="14" height="7" viewBox="0 0 14 7"><path d="M0 7l7-7 7 7z" fill="#fff" /></svg>
      <div className="flex h-[36px] items-center border-b border-white pl-[18px] text-[10.700px] font-bold">
        <span className="w-[661px] pt-[2px]">Sheets</span>
        <div className="flex h-[25px] w-[115px] items-center justify-center rounded-[3px] border border-[#c4c4c4] pt-px text-[9.950px] whitespace-nowrap">Create new sheet</div>
        <div className="ml-[14px] flex h-[25px] w-[42px] items-center justify-center rounded-l-[3px] border-b border-[#1d1d1d]">
          <svg width="15" height="13" viewBox="0 0 15 13"><path d="M0 0h6.700v5.500H0zM8.200 0H15v5.500H8.200zM0 7.500h6.700V13H0zM8.200 7.500H15V13H8.200z" fill="#fff" /></svg>
        </div>
        <div className="flex h-[25px] w-[44px] items-center justify-center rounded-[3px] border border-[#a0a0a0]">
          <svg width="15" height="12" viewBox="0 0 15 12"><path d="M0 1h15M0 4.300h15M0 7.700h15M0 11h15" stroke="#fff" strokeWidth="1.700" /></svg>
        </div>
      </div>
      <div className="flex h-[55px] items-center pb-[2px] pl-[19px] text-[10.700px] font-bold">
        <svg width="10" height="8" viewBox="0 0 10 8"><path d="M0 0h10L5 8z" fill="#fff" /></svg>
        <span className="ml-[5px]">My sheets (13)</span>
      </div>
      <div className="grid w-[872px] grid-cols-6 gap-x-[17.600px] gap-y-[17px] pl-[18px]">
        {sheets.map((s) => (
          <div key={s.title} className={`h-[127px] overflow-hidden bg-[#191b24] ${s.selected ? 'rounded-[2px] outline outline-[#5a5a5a]' : ''}`}>
            {s.thumb}
            <div className="flex h-[41px] items-center pl-[8px] text-[11px] leading-[14.500px] whitespace-pre">{s.title}</div>
          </div>
        ))}
        <div className="flex h-[127px] flex-col items-center border-t border-r border-dashed border-[#8a8a8a] pt-[33px] text-center text-[11.200px] leading-[15.500px] text-[#595959]">
          <svg className="mb-[12.500px]" width="22" height="22" viewBox="0 0 22 22">
            <circle cx="11" cy="11" r="11" fill="#fff" />
            <path d="M4.500 11h13M11 4.500v13" stroke="#000" strokeWidth="2" />
          </svg>
          Create new<br />sheet
        </div>
      </div>
    </div>
  );
}

export default function App() {
  return (
    <div className="relative h-[685px] w-[1346px] overflow-hidden bg-white font-['Noto_Sans_CJK_SC',sans-serif]">
      <div className="w-[1344px]">
        <BrowserBar />
        <TopBar />
        <SelectionBar />
        <div className="mt-px h-[41px] bg-linear-to-r from-white from-[5%] via-[#cbcbcb] via-[33%] to-[#666] pl-[13px] text-[18px] leading-[39px] text-[#5f5f5f]">Sales Analysis</div>
        <Dashboard />
      </div>
      <SheetsPanel />
    </div>
  );
}
